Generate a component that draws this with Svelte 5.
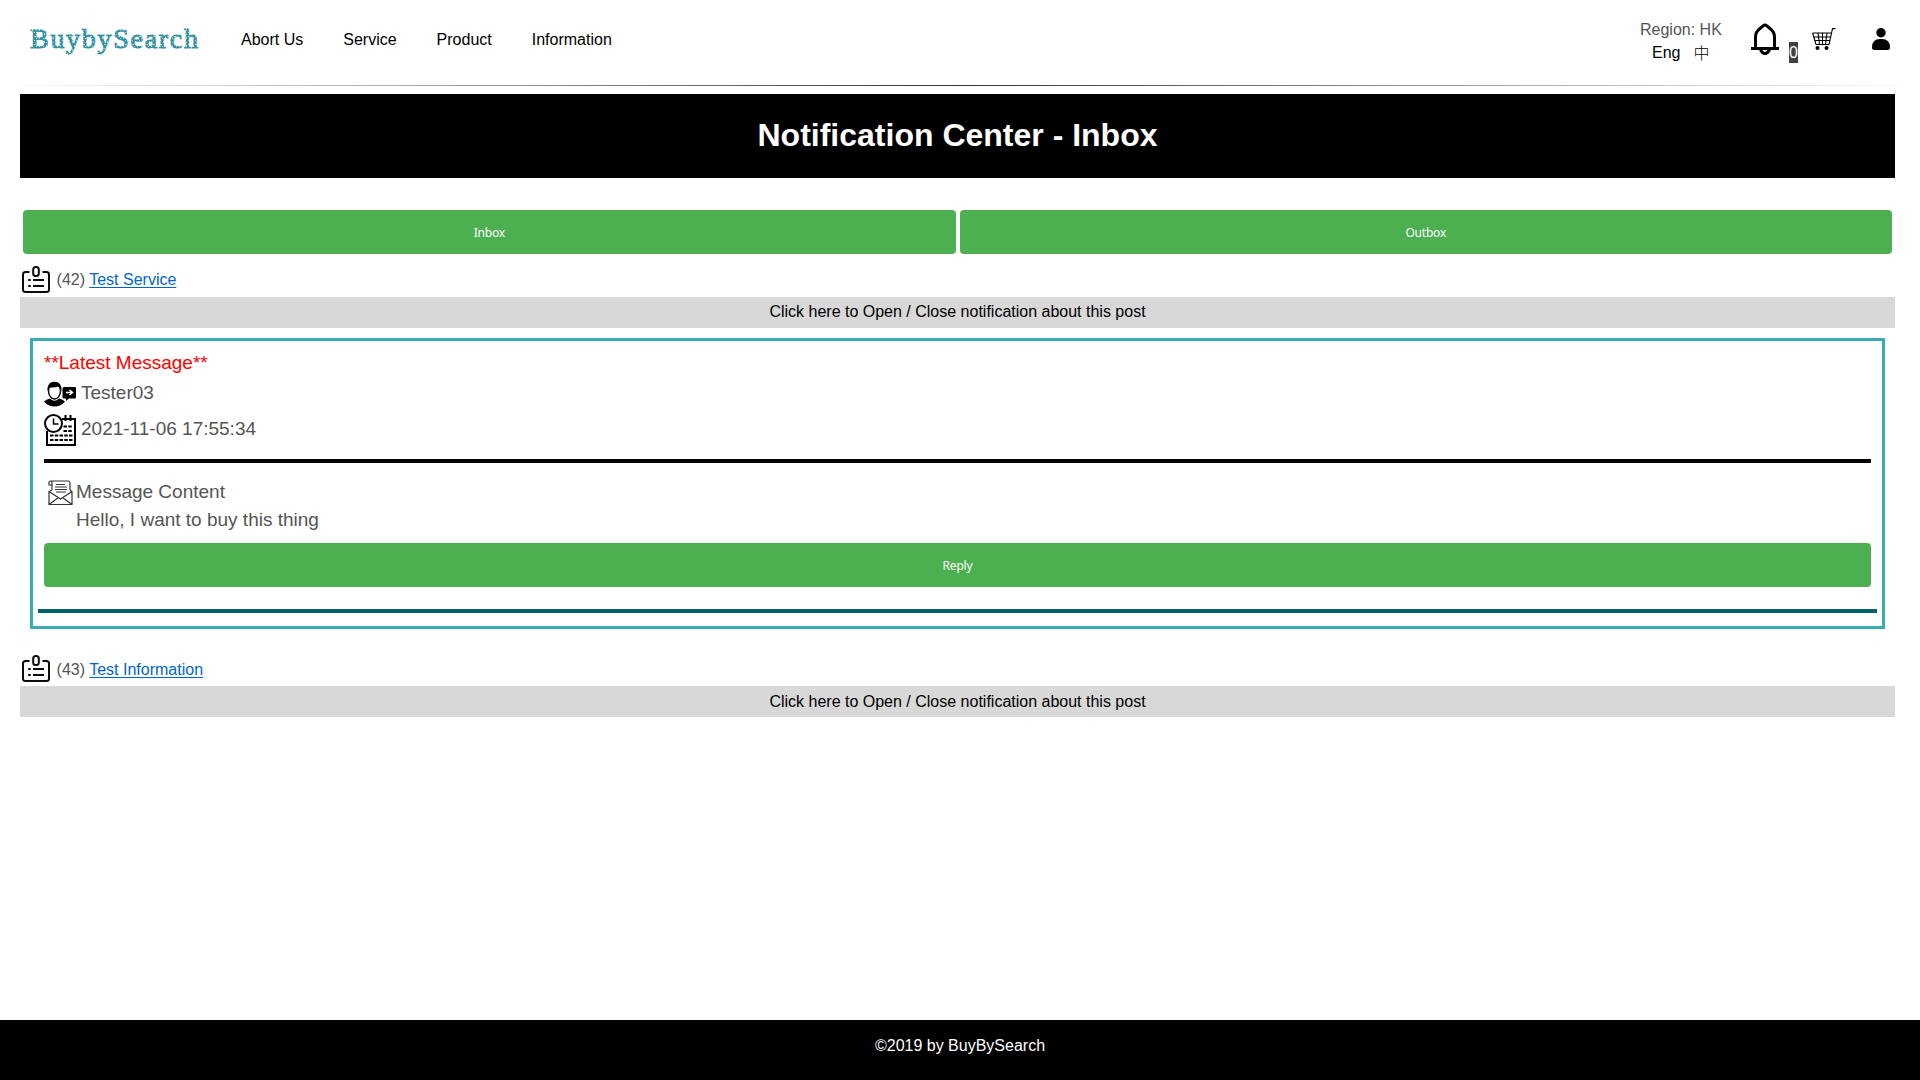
<script>
  const nav = ['Abort Us', 'Service', 'Product', 'Information'];
  const toggleLabel = 'Click here to Open / Close notification about this post';
</script>

{#snippet post(id, title)}
  <div class="post">
    <svg class="board" width="30" height="28" viewBox="0 0 30 28" fill="none" stroke="#0c0c0c" stroke-width="2">
      <path d="M8.500 6H4.500Q2 6 2 8.500V23.500Q2 26 4.500 26H25.500Q28 26 28 23.500V8.500Q28 6 25.500 6H21.500" />
      <rect x="12.200" y="1" width="5.600" height="9" rx="2.500" />
      <path d="M7.200 14h2.500M12 14h11M7.200 20h2.500M12 20h11" />
    </svg>
    <span>({id}) <a href="#post">{title}</a></span>
  </div>
  <div class="toggle">{toggleLabel}</div>
{/snippet}

<div class="page">
  <header>
    <svg class="logo" width="172" height="44" viewBox="0 -6 172 44">
      <defs>
        <pattern id="worn" width="7" height="8" patternUnits="userSpaceOnUse">
          <rect width="7" height="8" fill="#35909e" />
          <path d="M1 1h1v2h-1zM5 0h1v1h-1zM3 5h1v2h-1zM5 4h2v1h-2zM3 2h1v1h-1zM0 6h1v1h-1z" fill="#a5d2d7" />
        </pattern>
      </defs>
      <text x="1" y="23.500" textLength="168" fill="url(#worn)" stroke="url(#worn)" stroke-width=".9">BuybySearch</text>
    </svg>
    <nav>
      {#each nav as item}<a href="#nav">{item}</a>{/each}
    </nav>
    <div class="region">
      <span>Region: HK</span>
      <div class="langs"><span>Eng</span><span class="zh">中</span></div>
    </div>
    <svg class="bell" width="28" height="33" viewBox="0 0 28 33" fill="none" stroke="#000" stroke-width="3">
      <path d="M4.500 25V14Q4.500 9 9 5.500L12 3Q14 1 16 3L19 5.500Q23.500 9 23.500 14V25M0 25.500H28M9.500 26.500Q11 30.500 14 30.500Q17 30.500 18.500 26.500" />
    </svg>
    <span class="count">0</span>
    <svg class="cart" width="24" height="23" viewBox="0 0 24 23" fill="none" stroke="#000" stroke-width="1.100">
      <path d="M23.500 .6H20.500L17 16.500H4M.6 5H19.500M.6 5L4 16.500M2 9H18.500M3 12.500H17.500M6 5L7.500 16M10.500 5V16M15 5L13.500 16" />
      <circle cx="5.500" cy="20" r="2" fill="#000" stroke="none" /><circle cx="14.500" cy="20" r="2" fill="#000" stroke="none" />
    </svg>
    <svg class="user" width="18" height="23" viewBox="0 0 18 23"><circle cx="9" cy="4.700" r="4.700" /><path d="M0 19.500Q0 11 8 11H10Q18 11 18 19.500Q18 22 15.500 22H2.500Q0 22 0 19.500Z" /></svg>
  </header>
  <div class="rule"></div>
  <main>
    <h1>Notification Center - Inbox</h1>
    <div class="tabs"><button>Inbox</button><button>Outbox</button></div>
    {@render post(42, 'Test Service')}
    <section class="thread">
      <div class="message">
        <div class="latest">**Latest Message**</div>
        <div class="line sender">
          <svg width="32" height="26" viewBox="0 0 32 26">
            <ellipse cx="10.500" cy="10" rx="6" ry="8" fill="#fff" stroke="#000" stroke-width="1.400" />
            <path d="M3.500 10C3 4 6 .8 10.500 .8S18 4 17.500 10C16 8 16 6 13.500 5.500C11 7 7 6 5.500 7ZM0 20.500Q2 18.500 6 17.500Q10.500 22 15 17.500Q19 18.500 21 20.500Q17 25.500 10.500 25.500T0 20.500ZM20 6H31Q32 6 32 7V16Q32 17.500 30.500 17.500H25L22 20V17.500H20Q18.500 17.500 18.500 16V7.500Q18.500 6 20 6Z" />
            <path d="M22 11.500h6M25.500 9l3 2.500l-3 2.500" fill="none" stroke="#fff" stroke-width="1.500" />
          </svg>
          <span>Tester03</span>
        </div>
        <div class="line date">
          <svg width="32" height="33" viewBox="0 0 32 33" fill="none" stroke="#000" stroke-width="2">
            <path d="M3 17V31H31V5H18M21.500 1V7M26.500 1V7" />
            <circle cx="9.500" cy="9.500" r="8.500" fill="#fff" /><path d="M9.500 4.500V10H14.500" stroke-width="1.500" />
            <path d="M19.500 12.500H28.500M19.500 17H28.500M6 21.500H28.500M6 26H28.500" stroke-width="1.800" stroke-dasharray="3.500 1.250" />
          </svg>
          <span>2021-11-06 17:55:34</span>
        </div>
        <div class="divider"></div>
        <div class="content">
          <svg width="26" height="26" viewBox="0 0 26 26" fill="none" stroke="#333" stroke-width="1.200">
            <path d="M4 10V2.500Q4 1 2.500 1T1 2.500V5H4M2.500 1H20.500Q22 1 22 3V10M4 10L1 11.500V24.500H24V11.500L22 10M1 11.500L12.500 19L24 11.500M1 24.500L10.500 17.500M24 24.500L14.500 17.500M8 4.500H17M7 7H19M7 9.500H19M8 12H18" />
          </svg>
          <div>Message Content<br />Hello, I want to buy this thing</div>
        </div>
        <button>Reply</button>
      </div>
      <div class="end"></div>
    </section>
    <div class="second">{@render post(43, 'Test Information')}</div>
  </main>
  <footer>©2019 by BuyBySearch</footer>
</div>

<style>
  :global(body) { margin: 0; }
  .page { box-sizing: border-box; height: 1080px; display: flex; flex-direction: column; font: 16px/24px "Liberation Sans", Arial, sans-serif; color: #555; background: #fff; overflow: hidden; }
  svg { display: block; flex: none; }
  header { height: 85px; display: flex; align-items: flex-start; flex: none; }
  .logo { margin: 18px 0 0 29px; font: 28px "Liberation Serif", serif; overflow: visible; }
  nav { display: flex; gap: 40px; margin: 28px 0 0 40px; }
  nav a { color: #000; text-decoration: none; }
  .region { margin: 18px 0 0 auto; width: 83px; line-height: 23px; white-space: nowrap; }
  .langs { display: flex; gap: 13px; height: 23px; color: #000; padding-left: 12px; }
  .zh { font-family: "Noto Sans CJK TC", "Noto Sans CJK SC", sans-serif; font-weight: 300; }
  .bell { margin: 23px 0 0 28px; }
  .count { margin: 42px 0 0 10px; width: 9px; height: 21px; line-height: 21px; color: #fff; background: #404040; }
  .cart { margin: 28px 0 0 14px; }
  .user { margin: 28px 30px 0 36px; }
  .rule { height: 1px; flex: none; background: linear-gradient(90deg, transparent, #333 50%, transparent); }
  main { flex: 1; padding: 8px 25px 0 20px; }
  h1 { margin: 0; height: 84px; background: #000; color: #fff; font-size: 32px; line-height: 82px; text-align: center; }
  .tabs { display: flex; gap: 4px; margin-top: 32px; padding: 0 3px; }
  button { display: block; flex: 1; box-sizing: border-box; width: 100%; height: 44px; padding: 0; border: 0; border-radius: 4px; background: #4caf50; color: #fff; font: 12px "Noto Sans", sans-serif; letter-spacing: -.2px; }
  .post { height: 43px; box-sizing: border-box; padding: 12px 0 0 1px; display: flex; gap: 5.600px; }
  .post span { padding-top: 2px; }
  .post a { color: #0066cc; text-underline-offset: 2px; }
  .second .post span { padding-top: 3px; }
  .toggle { height: 31px; line-height: 30px; background: #d8d8d8; color: #000; text-align: center; }
  .second .toggle { line-height: 32px; }
  .thread { box-sizing: border-box; height: 291px; margin: 10px 10px 14px; border: 3px solid #38adb4; padding: 7px 5px 0; font-size: 19px; line-height: 28px; }
  .message { padding: 0 6px; }
  .latest { height: 28px; line-height: 30px; color: #f00; }
  .line { display: flex; gap: 5px; }
  .sender { height: 34px; padding-top: 5px; box-sizing: border-box; }
  .sender span { margin-top: -2px; }
  .date { height: 49px; padding-top: 4px; box-sizing: border-box; }
  .date span { padding-top: 1px; }
  .divider { height: 4px; background: #000; }
  .content { height: 80px; box-sizing: border-box; padding: 15px 0 0 4px; display: flex; gap: 2px; }
  .content svg { margin-top: 2px; }
  .end { height: 4px; margin-top: 22px; background: #006169; }
  footer { flex: none; height: 60px; line-height: 51px; background: #000; color: #fff; text-align: center; }
</style>
